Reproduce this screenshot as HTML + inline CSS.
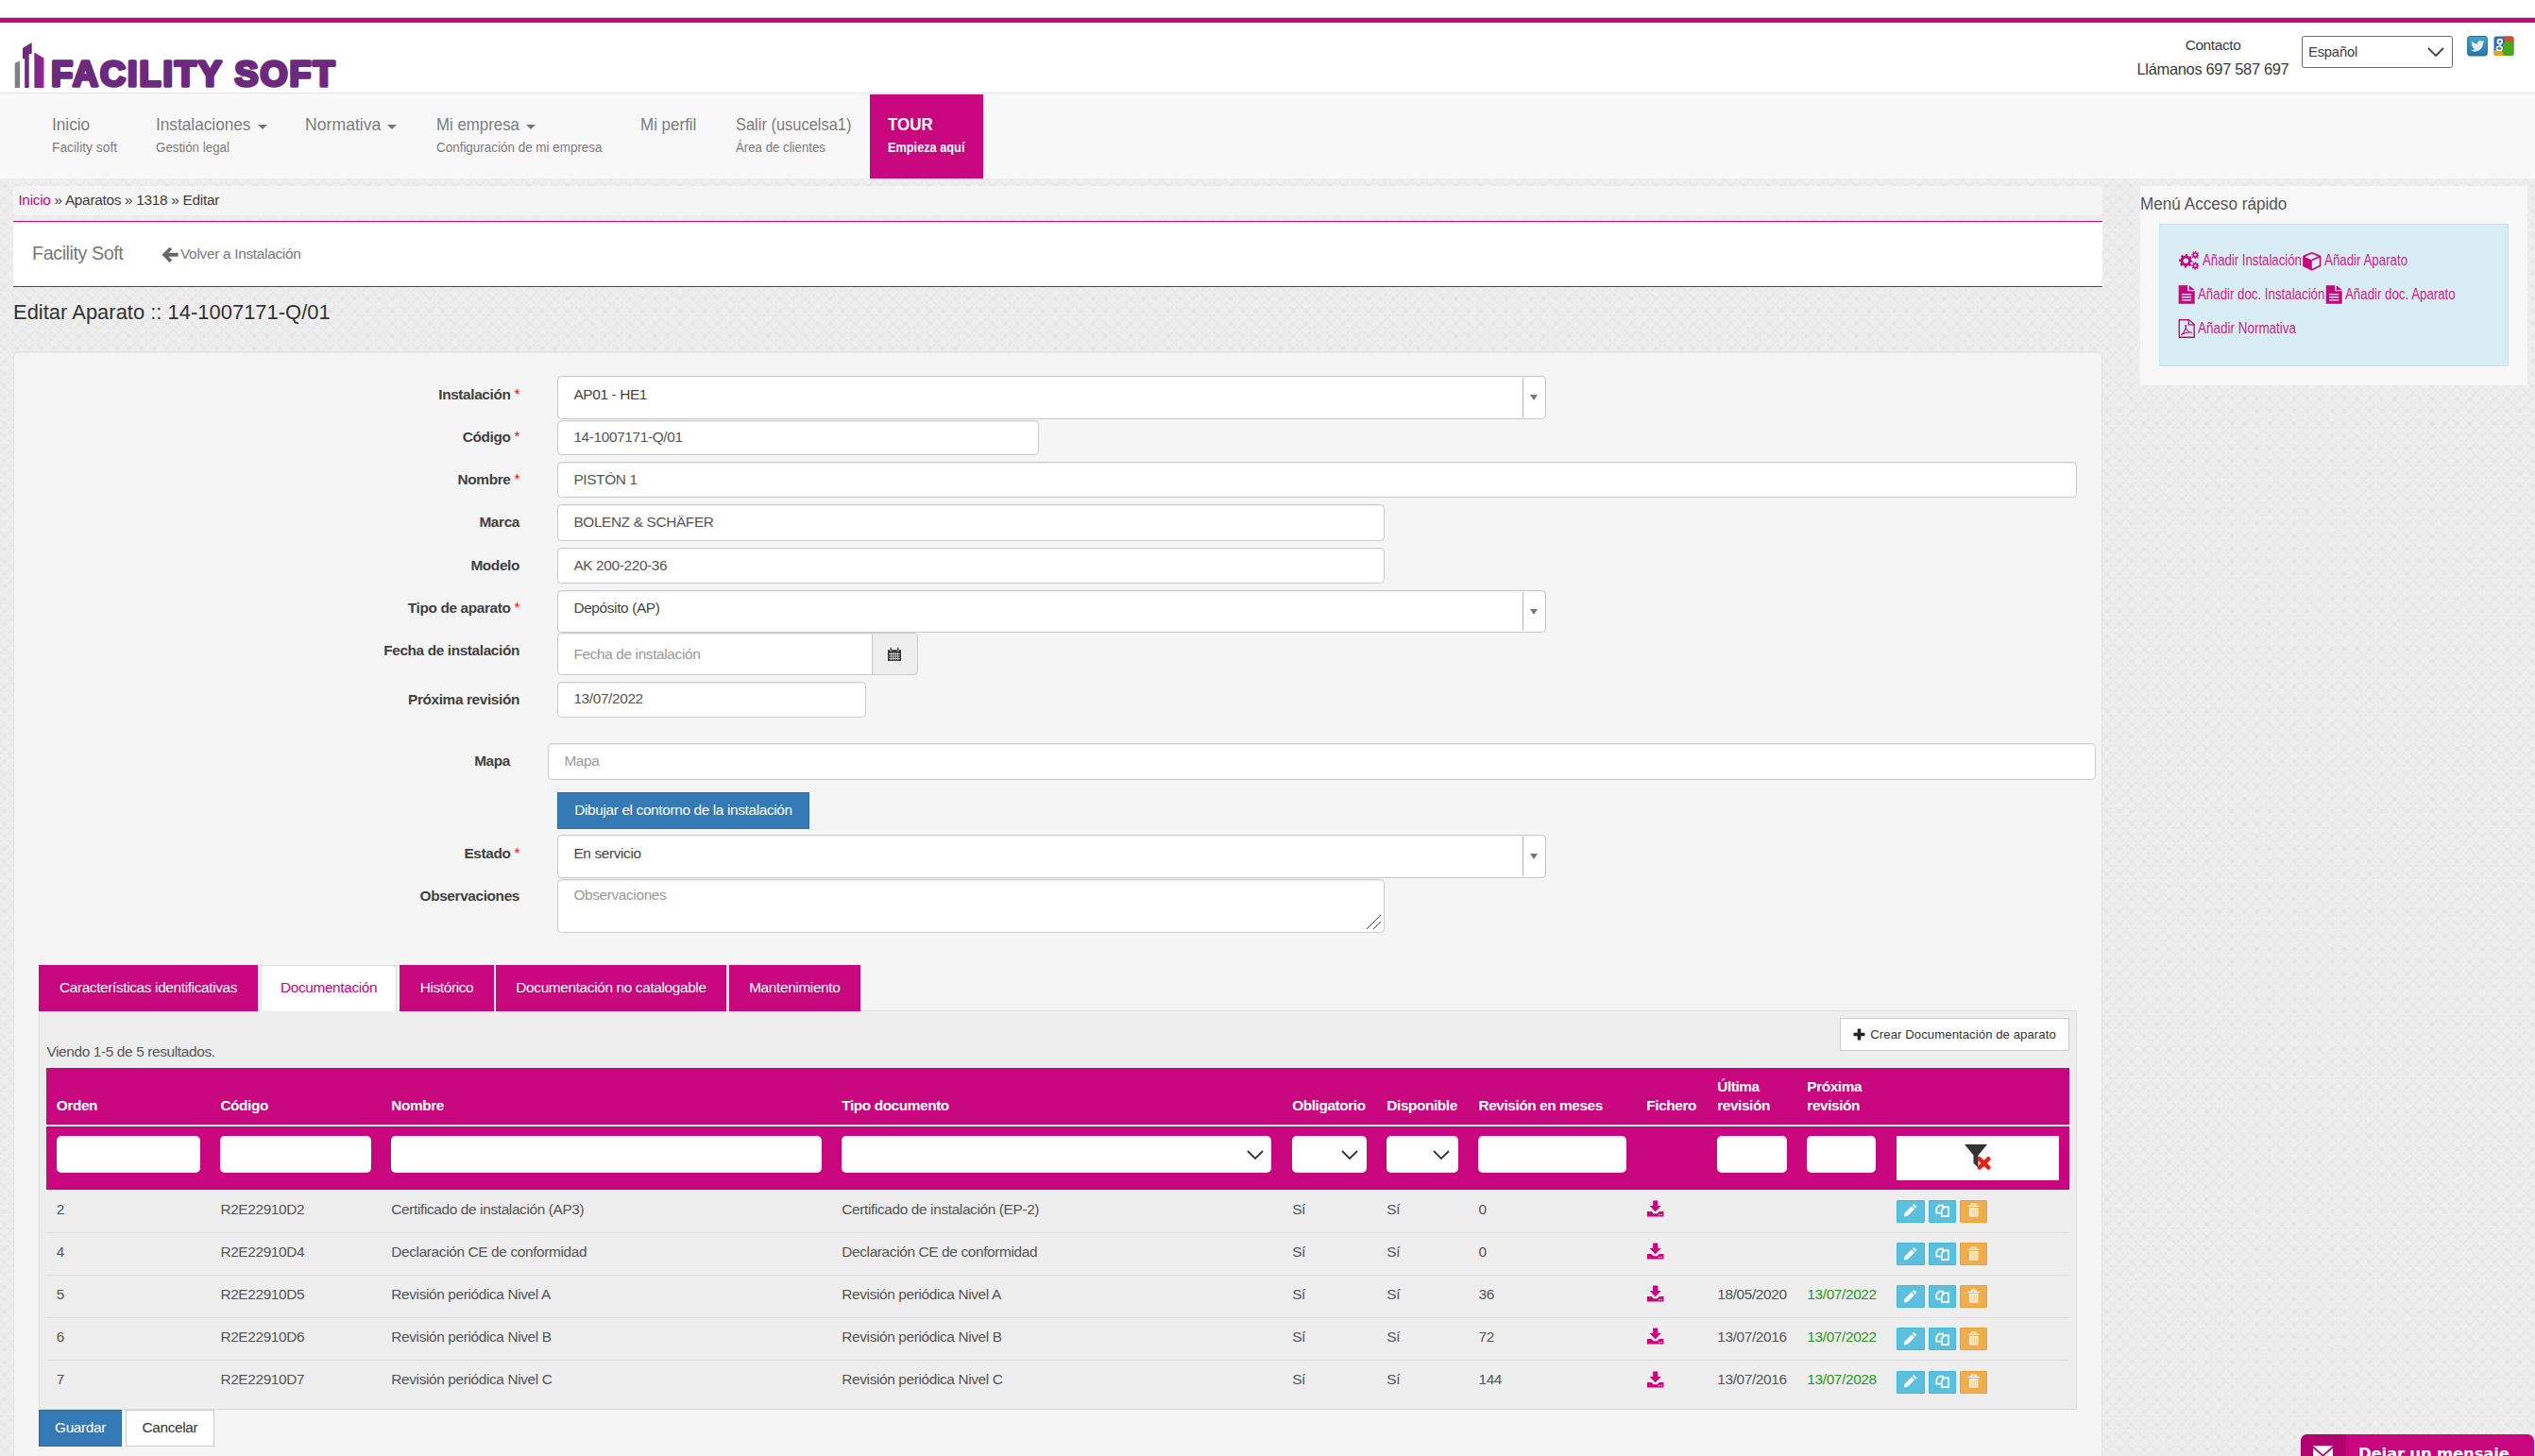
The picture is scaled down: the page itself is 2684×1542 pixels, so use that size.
<!DOCTYPE html>
<html lang="es">
<head>
<meta charset="utf-8">
<title>Editar Aparato :: 14-1007171-Q/01</title>
<style>
*{box-sizing:border-box;margin:0;padding:0}
html,body{width:2684px;height:1542px;overflow:hidden}
body{font-family:"Liberation Sans",sans-serif;font-size:15.4px;letter-spacing:-0.36px;color:#333;background-color:#eeeeee;position:relative}
#bgp{position:absolute;left:0;top:0;width:2684px;height:1542px}
.abs{position:absolute}
a{color:#c8067e;text-decoration:none}
#hdr{left:0;top:0;width:2684px;height:99px;background:#fff;border-bottom:1px solid #e7e7e7}
#topline{left:0;top:18px;width:2684px;height:6px;background:#c8067e;border-top:1px solid #d5d5e2}
#nav{left:0;top:99px;width:2684px;height:90px;background:#f8f8f8}
.nc{position:absolute;white-space:nowrap;transform-origin:0 50%;letter-spacing:0;color:#7d7d7d;line-height:1}
.nb{font-size:19px;top:122.3px}
.ns{font-size:15.5px;top:147.6px}
.car{position:absolute;top:132px;width:0;height:0;border-left:5.2px solid transparent;border-right:5.2px solid transparent;border-top:5.5px solid #777}
#tour{left:921px;top:100px;width:120px;height:89px;background:#c8067e}
#bc{left:14px;top:197px;width:2212px;height:31px;background:#f5f5f5;border-radius:5px;padding:0 0 0 5.4px;line-height:30.4px;white-space:nowrap;letter-spacing:-0.3px;color:#3d3d3d}
#nb2{left:14px;top:234px;width:2212px;height:70px;background:#fff;border-top:1px solid #c8067e;border-bottom:1px solid #c8067e}
#h1{left:14px;top:317.200px;font-size:21.9px;line-height:28px;letter-spacing:0.03px;color:#333;white-space:nowrap}
#side{left:2266px;top:197px;width:410px;height:211px;background:#f8f8f8}
#sbox{left:2286px;top:237px;width:370px;height:151px;background:#d9edf7;border:1px solid #bce8f1}
.sl{position:absolute;white-space:nowrap;transform-origin:0 50%;letter-spacing:0;color:#cb1f88;font-size:16px;line-height:1}
.ico{position:absolute;display:block}
</style>
</head>
<body>
<svg id="bgp" width="2684" height="1542"><defs><pattern id="pt" x="2.4" y="9.2" width="13.25" height="13.25" patternUnits="userSpaceOnUse">
<rect x="0" y="0" width="4.4" height="4.4" fill="#e6e6e6"/>
<rect x="10.5" y="11" width="2" height="1.8" fill="#e4e4e4"/><rect x="5.3" y="11" width="2" height="1.8" fill="#e4e4e4"/>
<rect x="10.5" y="5.6" width="2" height="1.8" fill="#e4e4e4"/><rect x="5.3" y="5.6" width="2" height="1.8" fill="#e4e4e4"/>
<rect x="8" y="8.4" width="1.7" height="1.7" fill="#e4e4e4"/>
</pattern></defs><rect width="2684" height="1542" fill="url(#pt)"/></svg>
<div id="hdr" class="abs"></div>
<div id="topline" class="abs"></div>

<!-- logo -->
<svg class="ico" style="left:14px;top:42px" width="350" height="56" viewBox="0 0 350 56">
 <defs><linearGradient id="lg1" x1="0" x2="1" y1="0" y2="0"><stop offset="0" stop-color="#6d2a7f"/><stop offset="1" stop-color="#a0209a"/></linearGradient></defs>
 <path d="M1.7 24.7 7 22.8V51H1.7Z" fill="#808080"/>
 <path d="M10 9 19.7 3V15H16.7V51H12.2V20.2H10Z" fill="#6d2a7f"/>
 <path d="M22.4 13.5 32.5 19.5V51H22.4Z" fill="url(#lg1)"/>
 <text x="40.2" y="49.2" font-family="Liberation Sans, sans-serif" font-weight="bold" font-size="37.3" letter-spacing="2.1" fill="#6b2a7e" stroke="#6b2a7e" stroke-width="3.6" stroke-linejoin="round" stroke-linecap="round">FACILITY SOFT</text>
</svg>

<!-- header right -->
<div class="abs" style="left:2262px;top:37.600px;width:162px;text-align:center;line-height:20px;color:#3a3a3a;white-space:nowrap">Contacto</div>
<div class="abs" style="left:2252px;top:62px;width:182px;text-align:center;line-height:22px;font-size:16.5px;letter-spacing:-0.35px;color:#3a3a3a;white-space:nowrap">Llámanos 697 587 697</div>
<div class="abs" style="left:2437px;top:38px;width:160px;height:34px;border:1px solid #6a6a6a;border-radius:2.500px;background:#fff;font-size:14.7px;letter-spacing:-0.15px;line-height:32px;padding-left:6px;color:#3c3c3c">Español
 <svg class="ico" style="left:131px;top:10px" width="20" height="12" viewBox="0 0 20 12"><path d="M2 2 L10 10 L18 2" fill="none" stroke="#444" stroke-width="1.8"/></svg>
</div>
<!-- twitter -->
<svg class="ico" style="left:2612px;top:38px" width="22" height="22" viewBox="0 0 22 22">
 <defs><linearGradient id="tw" x1="0" x2="0" y1="0" y2="1"><stop offset="0" stop-color="#4aa3cc"/><stop offset="1" stop-color="#2874a6"/></linearGradient></defs>
 <rect x="0.700" y="0.500" width="20.600" height="20.500" rx="2.500" fill="url(#tw)" stroke="#1f6a98" stroke-width="1"/>
 <path d="M4 15c2 .2 3.400-.3 4.500-1.200-1.400 0-2.300-.9-2.700-2 .5.100.9.100 1.300 0-1.500-.4-2.300-1.500-2.300-2.900.4.200.9.400 1.300.400-1.300-1-1.600-2.600-.9-3.900 1.600 1.900 3.600 2.900 6 3-.4-1.900 1-3.500 2.800-3.500.8 0 1.500.3 2.100.9.700-.100 1.300-.400 1.800-.700-.200.700-.7 1.200-1.200 1.600.600-.100 1.100-.200 1.600-.400-.400.600-.9 1.100-1.400 1.500.2 4.900-3.700 8.700-8.500 8.700-1.700 0-3.200-.5-4.400-1.500z" fill="#e4f0f7"/>
</svg>
<!-- google -->
<svg class="ico" style="left:2640px;top:38px" width="22" height="22" viewBox="0 0 22 22">
 <rect x="0.500" y="0.500" width="21" height="20.500" rx="2.500" fill="#2c6dc2"/>
 <path d="M10 0.500h9a2.500 2.500 0 0 1 2.500 2.500V5.500H12z" fill="#df4a2c"/>
 <path d="M12.500 5.500H21.500V18.500a2.500 2.500 0 0 1-2.500 2.500H11L8.500 13z" fill="#4aa51f"/>
 <path d="M0.500 15h8.500l2 6H3a2.500 2.500 0 0 1-2.500-2.500z" fill="#e6a51e"/>
 <circle cx="6.800" cy="6" r="2.300" fill="none" stroke="#eef3fa" stroke-width="1.900"/>
 <ellipse cx="6.300" cy="13.300" rx="2.800" ry="2.200" fill="none" stroke="#eef3fa" stroke-width="1.700"/>
 <path d="M8 8.200 6.500 11" stroke="#eef3fa" stroke-width="1.500"/>
</svg>

<!-- nav -->
<div id="nav" class="abs"></div>
<span class="nc nb" style="left:55px;transform:scaleX(0.906)">Inicio</span>
<span class="nc ns" style="left:55px;transform:scaleX(0.891)">Facility soft</span>
<span class="nc nb" style="left:164.600px;transform:scaleX(0.906)">Instalaciones</span><i class="car" style="left:272.600px"></i>
<span class="nc ns" style="left:164.600px;transform:scaleX(0.862)">Gestión legal</span>
<span class="nc nb" style="left:323px;transform:scaleX(0.929)">Normativa</span><i class="car" style="left:410.200px"></i>
<span class="nc nb" style="left:461.500px;transform:scaleX(0.886)">Mi empresa</span><i class="car" style="left:557.400px"></i>
<span class="nc ns" style="left:461.500px;transform:scaleX(0.867)">Configuración de mi empresa</span>
<span class="nc nb" style="left:678.400px;transform:scaleX(0.893)">Mi perfil</span>
<span class="nc nb" style="left:778.700px;transform:scaleX(0.865)">Salir (usucelsa1)</span>
<span class="nc ns" style="left:778.700px;transform:scaleX(0.854)">Área de clientes</span>
<div id="tour" class="abs"></div>
<span class="nc nb" style="left:940px;transform:scaleX(0.892);color:#fff;font-weight:bold">TOUR</span>
<span class="nc ns" style="left:940px;transform:scaleX(0.822);color:#fff;font-weight:bold">Empieza aquí</span>

<!-- breadcrumb -->
<div id="bc" class="abs"><a>Inicio</a> » Aparatos » 1318 » Editar</div>

<!-- navbar 2 -->
<div id="nb2" class="abs">
 <span class="abs" style="left:20px;top:20.5px;font-size:19.8px;line-height:24px;letter-spacing:-0.45px;color:#777;white-space:nowrap">Facility Soft</span>
 <svg class="ico" style="left:156.500px;top:25.600px" width="18.600" height="17.600" viewBox="0 0 18 17"><path d="M8.300.6 10.800 3 7.200 6.500H17v4H7.200l3.600 3.500-2.500 2.400L.5 8.500z" fill="#666"/></svg>
 <span class="abs" style="left:177px;top:23.800px;line-height:20px;color:#777;white-space:nowrap;letter-spacing:-0.3px">Volver a Instalación</span>
</div>

<div id="h1" class="abs">Editar Aparato :: 14-1007171-Q/01</div>

<!-- sidebar -->
<div id="side" class="abs"></div>
<span class="nc" style="left:2266px;top:207.3px;font-size:18.8px;color:#555;transform:scaleX(.913)">Menú Acceso rápido</span>
<div id="sbox" class="abs"></div>
<!-- sidebar icons + links -->
<svg class="ico" style="left:2306px;top:265px" width="24" height="22" viewBox="0 0 24 22" fill="none" stroke="#c8067e">
 <circle cx="8.300" cy="11.200" r="4.200" stroke-width="3"/>
 <circle cx="8.300" cy="11.200" r="6.100" stroke-width="2.200" stroke-dasharray="2.450 2.340" stroke-dashoffset="1.200"/>
 <circle cx="18.300" cy="5.100" r="2.100" stroke-width="1.700"/>
 <circle cx="18.300" cy="5.100" r="3.350" stroke-width="1.300" stroke-dasharray="1.350 1.280" stroke-dashoffset=".65"/>
 <circle cx="18.300" cy="16.500" r="2.100" stroke-width="1.700"/>
 <circle cx="18.300" cy="16.500" r="3.350" stroke-width="1.300" stroke-dasharray="1.350 1.280" stroke-dashoffset=".65"/>
</svg>
<span class="sl" style="left:2332px;top:268.200px;transform:scaleX(0.825)">Añadir Instalación</span>
<svg class="ico" style="left:2437px;top:266px" width="22" height="22" viewBox="0 0 22 22">
 <path d="M10.800 1.800 19.600 5.600V15.400L10.800 19.800 2 15.400V5.600Z" fill="none" stroke="#c8067e" stroke-width="1.700" stroke-linejoin="round"/>
 <path d="M2 5.600 10.800 9.600V19.800L2 15.400Z" fill="#c8067e"/>
 <path d="M10.800 9.600 19.600 5.600" stroke="#c8067e" stroke-width="1.700"/>
</svg>
<span class="sl" style="left:2461px;top:268.200px;transform:scaleX(0.832)">Añadir Aparato</span>

<svg class="ico" style="left:2306px;top:301px" width="20" height="22" viewBox="0 0 20 22">
 <path d="M.7 1.300H10.200V7.300H17.700V20.700H.7Z" fill="#c8067e"/><path d="M11.700 1.300 17.700 6H11.700Z" fill="#c8067e"/>
 <path d="M4.200 10.800H14.200M4.200 13.800H14.200M4.200 16.800H14.200" stroke="#d9edf7" stroke-width="1.500"/>
</svg>
<span class="sl" style="left:2327.400px;top:303.900px;transform:scaleX(0.830)">Añadir doc. Instalación</span>
<svg class="ico" style="left:2462px;top:301px" width="20" height="22" viewBox="0 0 20 22">
 <path d="M.7 1.300H10.200V7.300H17.700V20.700H.7Z" fill="#c8067e"/><path d="M11.700 1.300 17.700 6H11.700Z" fill="#c8067e"/>
 <path d="M4.200 10.800H14.200M4.200 13.800H14.200M4.200 16.800H14.200" stroke="#d9edf7" stroke-width="1.500"/>
</svg>
<span class="sl" style="left:2482.800px;top:303.900px;transform:scaleX(0.830)">Añadir doc. Aparato</span>

<svg class="ico" style="left:2306px;top:337px" width="20" height="22" viewBox="0 0 20 22" fill="none" stroke="#c8067e">
 <path d="M1.300 1.700H11.500L17.200 6.500V20.300H1.300Z" stroke-width="1.400" stroke-linejoin="round"/>
 <path d="M11.300 2V6.800H17" stroke-width="1.300"/>
 <path d="M3.500 17.500C6 16 8 12 8.600 8.200 8.800 7 7.700 7 7.800 8.200 8.300 12 11 14.800 14.800 15.300 13 14.400 7 15.500 3.500 17.500Z" stroke-width="1.100" stroke-linejoin="round"/>
</svg>
<span class="sl" style="left:2327.400px;top:340.400px;transform:scaleX(0.842)">Añadir Normativa</span>
<!-- form well -->
<style>
#well{left:14px;top:371.800px;width:2212px;height:1200px;background:#f5f5f5;border:1px solid #e3e3e3;border-radius:5px;box-shadow:inset 0 1px 1px rgba(0,0,0,.05)}
.lb{position:absolute;left:250px;width:300px;text-align:right;font-weight:bold;line-height:20px;color:#414141;white-space:nowrap;letter-spacing:-0.38px}
.lb em{color:#f00;font-style:normal;font-weight:normal;position:relative;top:-1px}
.inp{position:absolute;left:590px;background:#fff;border:1px solid #ccc;border-radius:4.400px;box-shadow:inset 0 1px 1px rgba(0,0,0,.075);color:#555;padding-left:16.400px;white-space:nowrap;overflow:hidden}
.ph{color:#999}
.s2{position:absolute;left:590px;width:1046.600px;height:45.500px;background:#fff;border:1px solid #c8c8c8;border-radius:4.400px;box-shadow:inset 0 1px 1px rgba(0,0,0,.05);color:#444;padding-left:16.400px;line-height:36px;white-space:nowrap}
.s2 i{position:absolute;right:0;top:1px;bottom:1px;width:23.600px;border-left:1px solid #bbb}
.s2 i:after{content:"";position:absolute;left:7.100px;top:17.600px;border-left:4.600px solid transparent;border-right:4.600px solid transparent;border-top:6px solid #777}
</style>
<div id="well" class="abs"></div>

<div class="lb" style="top:407.700px">Instalación <em>*</em></div>
<div class="s2" style="top:398.300px;line-height:37.400px">AP01 - HE1<i></i></div>

<div class="lb" style="top:453px">Código <em>*</em></div>
<div class="inp" style="top:444.500px;width:509.500px;height:37.400px;line-height:33.400px">14-1007171-Q/01</div>

<div class="lb" style="top:497.500px">Nombre <em>*</em></div>
<div class="inp" style="top:489px;width:1608.500px;height:38px;line-height:36px">PISTÓN 1</div>

<div class="lb" style="top:542.600px">Marca</div>
<div class="inp" style="top:533.600px;width:875.500px;height:39px;line-height:35.400px">BOLENZ &amp; SCHÄFER</div>

<div class="lb" style="top:588.600px">Modelo</div>
<div class="inp" style="top:579.800px;width:875.500px;height:38px;line-height:36px">AK 200-220-36</div>

<div class="lb" style="top:633.700px">Tipo de aparato <em>*</em></div>
<div class="s2" style="top:625.300px;height:44.500px">Depósito (AP)<i></i></div>

<div class="lb" style="top:678.900px">Fecha de instalación</div>
<div class="inp ph" style="top:670px;width:333.500px;height:44.600px;line-height:43.500px;border-radius:4.400px 0 0 4.400px">Fecha de instalación</div>
<div class="abs" style="left:922.500px;top:670px;width:49px;height:44.600px;background:#eee;border:1px solid #ccc;border-radius:0 4.400px 4.400px 0">
 <svg class="ico" style="left:15.500px;top:13.800px" width="16" height="16" viewBox="0 0 16 16"><path d="M1 3.200H15V15H1Z" fill="#333"/><path d="M3.200.8H5.200V4.200H3.200ZM10.800.8H12.800V4.200H10.800Z" fill="#333" stroke="#eee" stroke-width=".5"/><path d="M2 7.500H14M2 10H14M2 12.500H14" stroke="#eee" stroke-width=".7"/><path d="M4.400 5.800V14.300M6.800 5.800V14.300M9.200 5.800V14.300M11.600 5.800V14.300" stroke="#eee" stroke-width=".7"/></svg>
</div>

<div class="lb" style="top:730.900px">Próxima revisión</div>
<div class="inp" style="top:722px;width:326.500px;height:38px;line-height:34.800px">13/07/2022</div>

<div class="lb" style="top:796px;left:240px">Mapa</div>
<div class="inp ph" style="left:580px;top:787px;width:1638.500px;height:38.500px;line-height:36.500px">Mapa</div>

<div class="abs" style="left:590px;top:839px;width:267px;height:39px;background:#337ab7;border:1px solid #2e6da4;color:#fff;line-height:35px;text-align:center;white-space:nowrap">Dibujar el contorno de la instalación</div>

<div class="lb" style="top:894px">Estado <em>*</em></div>
<div class="s2" style="top:884.200px;height:45.600px;line-height:38px">En servicio<i></i></div>

<div class="lb" style="top:938.700px">Observaciones</div>
<div class="inp ph" style="top:931px;width:875.500px;height:57px;line-height:32.400px">Observaciones
 <svg class="ico" style="right:2px;bottom:2px" width="17" height="17" viewBox="0 0 17 17"><path d="M1 16 16 1M8 16 16 8" stroke="#444" stroke-width="1"/></svg>
</div>

<!-- tabs -->
<style>
.tab{position:absolute;top:1022px;height:49px;background:#c8067e;color:#fff;text-align:center;line-height:48px;white-space:nowrap}
.tab.on{background:#fff;color:#c8067e;border:1px solid #ddd;border-bottom:0;height:49px;line-height:46px}
#tc{left:41px;top:1070px;width:2158px;height:423px;background:#eeeeee;border:1px solid #ddd}
</style>
<div id="tc" class="abs"></div>
<div class="tab" style="left:41px;width:232px">Características identificativas</div>
<div class="tab on" style="left:276.400px;width:143.400px">Documentación</div>
<div class="tab" style="left:423px;width:100px">Histórico</div>
<div class="tab" style="left:525px;width:244px">Documentación no catalogable</div>
<div class="tab" style="left:771.800px;width:139px">Mantenimiento</div>

<div class="abs" style="left:1948.300px;top:1078px;width:242.500px;height:34.500px;background:#fff;border:1px solid #ccc;font-size:13.200px;letter-spacing:.05px;line-height:33.600px;color:#333;white-space:nowrap;padding-left:31px">
 <svg class="ico" style="left:12.500px;top:10px" width="13" height="13" viewBox="0 0 13 13"><path d="M4.700.5H8.300V4.700H12.500V8.300H8.300V12.500H4.700V8.300H.5V4.700H4.700Z" fill="#222"/></svg>Crear Documentación de aparato</div>
<div class="abs" style="left:49.400px;top:1103.800px;line-height:20px;color:#555;white-space:nowrap">Viendo 1-5 de 5 resultados.</div>
<!-- table -->
<style>
#tb{position:absolute;left:49px;top:1131px;width:2141.700px;border-collapse:collapse;table-layout:fixed;color:#555}
#tb th,#tb td{padding:0 10.850px;text-align:left;vertical-align:middle;white-space:nowrap;overflow:hidden}
#tb thead th{background:#c8067e;color:#fff;font-weight:bold;vertical-align:bottom;line-height:19.800px;letter-spacing:-0.42px}
#tb tr.h1 th{height:61px;padding-bottom:10.600px;border-bottom:2px solid #eef8f1}
#tb tr.h2 th{height:68.400px;vertical-align:top;padding-top:10px}
#tb tbody td{height:45.120px;border-top:1px solid #ddd;line-height:20px;padding-bottom:4.400px}
#tb tbody tr:first-child td{border-top-color:#eee}
.fi{display:block;width:100%;height:38.800px;background:#fff;border-radius:5px;position:relative}
.fi svg{position:absolute;right:7.600px;top:13.500px}
.dl{display:block;margin-top:-1px}
.bx{display:inline-block;width:29.600px;height:24.200px;margin-right:4.200px;vertical-align:middle;position:relative;top:2.300px;border-radius:1px}
.bx+.bx{width:28.800px}
.bx svg{position:absolute;left:5.700px;top:2.500px;width:15.400px;height:15.400px}
.grn{color:#1f9a1f}
</style>
<div class="abs" style="left:48px;top:1131px;width:1px;height:129.400px;background:#f2fbf5"></div>
<table id="tb">
<colgroup><col style="width:173.550px"><col style="width:180.900px"><col style="width:477px"><col style="width:476.900px"><col style="width:100.200px"><col style="width:97.100px"><col style="width:177.900px"><col style="width:74.900px"><col style="width:95.100px"><col style="width:94.850px"><col style="width:193.300px"></colgroup>
<thead>
<tr class="h1"><th>Orden</th><th>Código</th><th>Nombre</th><th>Tipo documento</th><th>Obligatorio</th><th>Disponible</th><th>Revisión en meses</th><th>Fichero</th><th>Última<br>revisión</th><th>Próxima<br>revisión</th><th></th></tr>
<tr class="h2"><th><span class="fi"></span></th><th><span class="fi"></span></th><th><span class="fi"></span></th>
<th><span class="fi"><svg width="20" height="12" viewBox="0 0 20 12"><path d="M2 2 L10 10 L18 2" fill="none" stroke="#333" stroke-width="1.800"/></svg></span></th>
<th><span class="fi"><svg width="20" height="12" viewBox="0 0 20 12"><path d="M2 2 L10 10 L18 2" fill="none" stroke="#333" stroke-width="1.800"/></svg></span></th>
<th><span class="fi"><svg width="20" height="12" viewBox="0 0 20 12"><path d="M2 2 L10 10 L18 2" fill="none" stroke="#333" stroke-width="1.800"/></svg></span></th>
<th><span class="fi"></span></th><th></th><th><span class="fi"></span></th><th><span class="fi"></span></th>
<th><span class="fi" style="height:47.200px;border-radius:0;width:171.700px">
 <svg style="left:71px;top:8px;right:auto" width="32" height="30" viewBox="0 0 32 30"><path d="M1 1H25L15.500 12.500V25.500L10.500 21V12.500Z" fill="#333"/><path d="M16.800 16.300 26.300 25.300M26.300 16.300 16.800 25.300" stroke="#e2231a" stroke-width="4.600" stroke-linecap="round"/></svg></span></th></tr>
</thead>
<tbody>
<tr><td>2</td><td>R2E22910D2</td><td>Certificado de instalación (AP3)</td><td>Certificado de instalación (EP-2)</td><td>Sí</td><td>Sí</td><td>0</td><td><svg class="dl" width="19.400" height="18.200" viewBox="0 0 20 19"><path d="M7.300.5H12.700V6.300H16.400L10 12.700 3.600 6.300H7.300Z" fill="#c8067e"/><path d="M.8 12.600H5.600L8 15H12L14.400 12.600H19.200V18.300H.8Z" fill="#c8067e"/><circle cx="14.200" cy="16.200" r=".8" fill="#eee"/><circle cx="16.900" cy="16.200" r=".8" fill="#eee"/></svg></td><td></td><td></td><td><span class="bx" style="background:#5bc0de;border:1px solid #46b8da"><svg width="14" height="14" viewBox="0 0 14 14"><path d="M10.300.8 13.200 3.700 11.700 5.200 8.800 2.300ZM8 3.100 10.900 6 4.300 12.600.9 13.100 1.400 9.700Z" fill="#fff"/></svg></span><span class="bx" style="background:#5bc0de;border:1px solid #46b8da"><svg width="14" height="14" viewBox="0 0 14 14" fill="none" stroke="#fff" stroke-width="1.500"><path d="M1.200 5.200 3.700 2.400H7.300V9.600H1.200Z"/><path d="M6.200 6.800 8.700 4H12.800V12.800H6.200Z" fill="#5bc0de"/></svg></span><span class="bx" style="background:#f0ad4e;border:1px solid #eea236"><svg width="14" height="14" viewBox="0 0 14 14"><path d="M1.600 2.400H12.400V3.600H1.600ZM2.800 4.600H11.200V13.300H2.800Z" fill="#fff"/><path d="M5 2.400V1H9V2.400" fill="none" stroke="#fff" stroke-width="1.100"/><path d="M4.700 5.600V12.300M6.300 5.600V12.300M7.800 5.600V12.300M9.400 5.600V12.300" stroke="#f3bd72" stroke-width=".8"/></svg></span></td></tr>
<tr><td>4</td><td>R2E22910D4</td><td>Declaración CE de conformidad</td><td>Declaración CE de conformidad</td><td>Sí</td><td>Sí</td><td>0</td><td><svg class="dl" width="19.400" height="18.200" viewBox="0 0 20 19"><path d="M7.300.5H12.700V6.300H16.400L10 12.700 3.600 6.300H7.300Z" fill="#c8067e"/><path d="M.8 12.600H5.600L8 15H12L14.400 12.600H19.200V18.300H.8Z" fill="#c8067e"/><circle cx="14.200" cy="16.200" r=".8" fill="#eee"/><circle cx="16.900" cy="16.200" r=".8" fill="#eee"/></svg></td><td></td><td></td><td><span class="bx" style="background:#5bc0de;border:1px solid #46b8da"><svg width="14" height="14" viewBox="0 0 14 14"><path d="M10.300.8 13.200 3.700 11.700 5.200 8.800 2.300ZM8 3.100 10.900 6 4.300 12.600.9 13.100 1.400 9.700Z" fill="#fff"/></svg></span><span class="bx" style="background:#5bc0de;border:1px solid #46b8da"><svg width="14" height="14" viewBox="0 0 14 14" fill="none" stroke="#fff" stroke-width="1.500"><path d="M1.200 5.200 3.700 2.400H7.300V9.600H1.200Z"/><path d="M6.200 6.800 8.700 4H12.800V12.800H6.200Z" fill="#5bc0de"/></svg></span><span class="bx" style="background:#f0ad4e;border:1px solid #eea236"><svg width="14" height="14" viewBox="0 0 14 14"><path d="M1.600 2.400H12.400V3.600H1.600ZM2.800 4.600H11.200V13.300H2.800Z" fill="#fff"/><path d="M5 2.400V1H9V2.400" fill="none" stroke="#fff" stroke-width="1.100"/><path d="M4.700 5.600V12.300M6.300 5.600V12.300M7.800 5.600V12.300M9.400 5.600V12.300" stroke="#f3bd72" stroke-width=".8"/></svg></span></td></tr>
<tr><td>5</td><td>R2E22910D5</td><td>Revisión periódica Nivel A</td><td>Revisión periódica Nivel A</td><td>Sí</td><td>Sí</td><td>36</td><td><svg class="dl" width="19.400" height="18.200" viewBox="0 0 20 19"><path d="M7.300.5H12.700V6.300H16.400L10 12.700 3.600 6.300H7.300Z" fill="#c8067e"/><path d="M.8 12.600H5.600L8 15H12L14.400 12.600H19.200V18.300H.8Z" fill="#c8067e"/><circle cx="14.200" cy="16.200" r=".8" fill="#eee"/><circle cx="16.900" cy="16.200" r=".8" fill="#eee"/></svg></td><td>18/05/2020</td><td class="grn">13/07/2022</td><td><span class="bx" style="background:#5bc0de;border:1px solid #46b8da"><svg width="14" height="14" viewBox="0 0 14 14"><path d="M10.300.8 13.200 3.700 11.700 5.200 8.800 2.300ZM8 3.100 10.900 6 4.300 12.600.9 13.100 1.400 9.700Z" fill="#fff"/></svg></span><span class="bx" style="background:#5bc0de;border:1px solid #46b8da"><svg width="14" height="14" viewBox="0 0 14 14" fill="none" stroke="#fff" stroke-width="1.500"><path d="M1.200 5.200 3.700 2.400H7.300V9.600H1.200Z"/><path d="M6.200 6.800 8.700 4H12.800V12.800H6.200Z" fill="#5bc0de"/></svg></span><span class="bx" style="background:#f0ad4e;border:1px solid #eea236"><svg width="14" height="14" viewBox="0 0 14 14"><path d="M1.600 2.400H12.400V3.600H1.600ZM2.800 4.600H11.200V13.300H2.800Z" fill="#fff"/><path d="M5 2.400V1H9V2.400" fill="none" stroke="#fff" stroke-width="1.100"/><path d="M4.700 5.600V12.300M6.300 5.600V12.300M7.800 5.600V12.300M9.400 5.600V12.300" stroke="#f3bd72" stroke-width=".8"/></svg></span></td></tr>
<tr><td>6</td><td>R2E22910D6</td><td>Revisión periódica Nivel B</td><td>Revisión periódica Nivel B</td><td>Sí</td><td>Sí</td><td>72</td><td><svg class="dl" width="19.400" height="18.200" viewBox="0 0 20 19"><path d="M7.300.5H12.700V6.300H16.400L10 12.700 3.600 6.300H7.300Z" fill="#c8067e"/><path d="M.8 12.600H5.600L8 15H12L14.400 12.600H19.200V18.300H.8Z" fill="#c8067e"/><circle cx="14.200" cy="16.200" r=".8" fill="#eee"/><circle cx="16.900" cy="16.200" r=".8" fill="#eee"/></svg></td><td>13/07/2016</td><td class="grn">13/07/2022</td><td><span class="bx" style="background:#5bc0de;border:1px solid #46b8da"><svg width="14" height="14" viewBox="0 0 14 14"><path d="M10.300.8 13.200 3.700 11.700 5.200 8.800 2.300ZM8 3.100 10.900 6 4.300 12.600.9 13.100 1.400 9.700Z" fill="#fff"/></svg></span><span class="bx" style="background:#5bc0de;border:1px solid #46b8da"><svg width="14" height="14" viewBox="0 0 14 14" fill="none" stroke="#fff" stroke-width="1.500"><path d="M1.200 5.200 3.700 2.400H7.300V9.600H1.200Z"/><path d="M6.200 6.800 8.700 4H12.800V12.800H6.200Z" fill="#5bc0de"/></svg></span><span class="bx" style="background:#f0ad4e;border:1px solid #eea236"><svg width="14" height="14" viewBox="0 0 14 14"><path d="M1.600 2.400H12.400V3.600H1.600ZM2.800 4.600H11.200V13.300H2.800Z" fill="#fff"/><path d="M5 2.400V1H9V2.400" fill="none" stroke="#fff" stroke-width="1.100"/><path d="M4.700 5.600V12.300M6.300 5.600V12.300M7.800 5.600V12.300M9.400 5.600V12.300" stroke="#f3bd72" stroke-width=".8"/></svg></span></td></tr>
<tr><td>7</td><td>R2E22910D7</td><td>Revisión periódica Nivel C</td><td>Revisión periódica Nivel C</td><td>Sí</td><td>Sí</td><td>144</td><td><svg class="dl" width="19.400" height="18.200" viewBox="0 0 20 19"><path d="M7.300.5H12.700V6.300H16.400L10 12.700 3.600 6.300H7.300Z" fill="#c8067e"/><path d="M.8 12.600H5.600L8 15H12L14.400 12.600H19.200V18.300H.8Z" fill="#c8067e"/><circle cx="14.200" cy="16.200" r=".8" fill="#eee"/><circle cx="16.900" cy="16.200" r=".8" fill="#eee"/></svg></td><td>13/07/2016</td><td class="grn">13/07/2028</td><td><span class="bx" style="background:#5bc0de;border:1px solid #46b8da"><svg width="14" height="14" viewBox="0 0 14 14"><path d="M10.300.8 13.200 3.700 11.700 5.200 8.800 2.300ZM8 3.100 10.900 6 4.300 12.600.9 13.100 1.400 9.700Z" fill="#fff"/></svg></span><span class="bx" style="background:#5bc0de;border:1px solid #46b8da"><svg width="14" height="14" viewBox="0 0 14 14" fill="none" stroke="#fff" stroke-width="1.500"><path d="M1.200 5.200 3.700 2.400H7.300V9.600H1.200Z"/><path d="M6.200 6.800 8.700 4H12.800V12.800H6.200Z" fill="#5bc0de"/></svg></span><span class="bx" style="background:#f0ad4e;border:1px solid #eea236"><svg width="14" height="14" viewBox="0 0 14 14"><path d="M1.600 2.400H12.400V3.600H1.600ZM2.800 4.600H11.200V13.300H2.800Z" fill="#fff"/><path d="M5 2.400V1H9V2.400" fill="none" stroke="#fff" stroke-width="1.100"/><path d="M4.700 5.600V12.300M6.300 5.600V12.300M7.800 5.600V12.300M9.400 5.600V12.300" stroke="#f3bd72" stroke-width=".8"/></svg></span></td></tr>
</tbody>
</table>

<div class="abs" style="left:41px;top:1493px;width:88px;height:39px;background:#337ab7;border:1px solid #2e6da4;color:#fff;line-height:35.500px;text-align:center">Guardar</div>
<div class="abs" style="left:133.200px;top:1493px;width:93.500px;height:39px;background:#fff;border:1px solid #ccc;color:#333;line-height:35.500px;text-align:center">Cancelar</div>

<!-- chat widget -->
<div class="abs" style="left:2436px;top:1519px;width:247px;height:40px;background:#c8067e;border-radius:7px 7px 0 0;overflow:hidden">
 <div class="abs" style="left:0;top:0;width:48px;height:40px;background:#b3036f"></div>
 <svg class="ico" style="left:13.300px;top:12px" width="21" height="16" viewBox="0 0 22 16"><path d="M0 0H22L11 9.500Z" fill="#fff"/><path d="M0 2.500 11 12 22 2.500V16H0Z" fill="#fff"/></svg>
 <span class="abs" style="left:61px;top:9px;font-family:'DejaVu Sans',sans-serif;font-weight:bold;font-size:16.600px;letter-spacing:-0.25px;line-height:24px;color:#fff;white-space:nowrap">Dejar un mensaje</span>
</div>
</body>
</html>
